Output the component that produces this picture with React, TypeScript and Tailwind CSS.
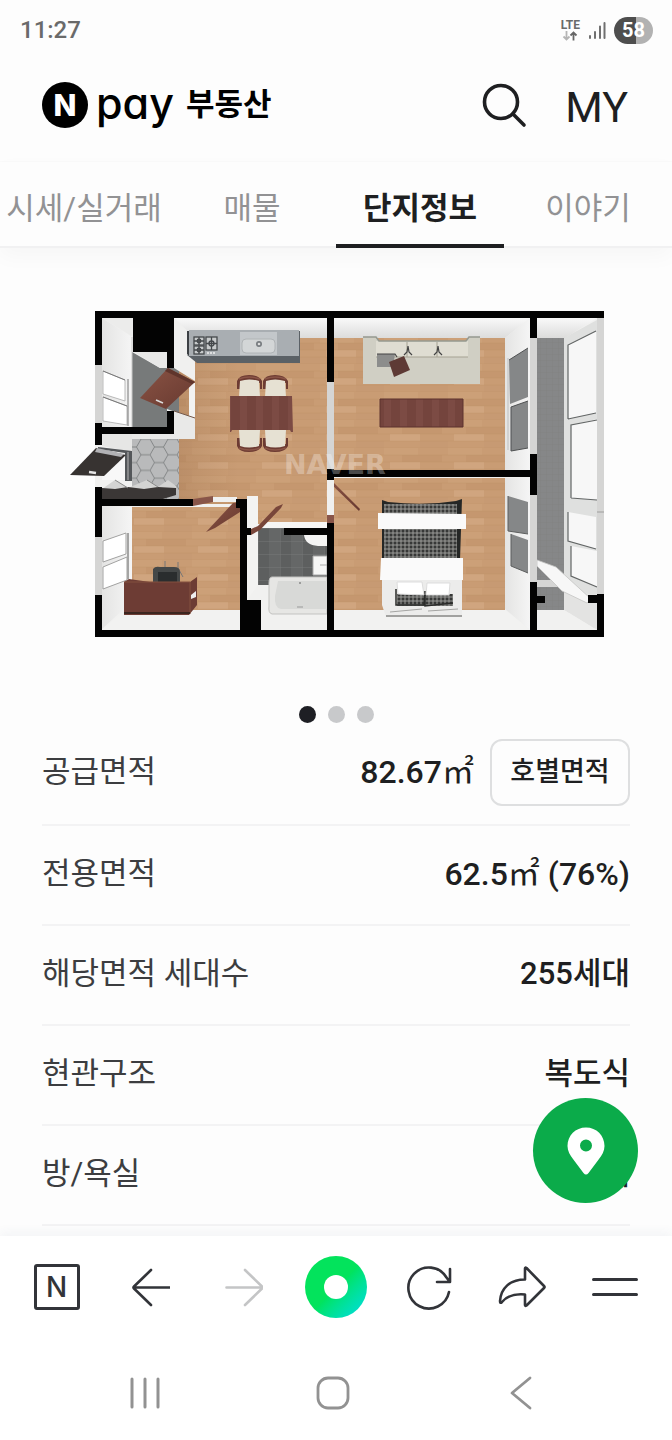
import React from "react";

const tabs = [
  { label: "시세/실거래", active: false },
  { label: "매물", active: false },
  { label: "단지정보", active: true },
  { label: "이야기", active: false },
];

const facts = [
  { label: "공급면적", value: "82.67", unit: "㎡", action: "호별면적" },
  { label: "전용면적", value: "62.5", unit: "㎡", note: " (76%)" },
  { label: "해당면적 세대수", value: "255세대" },
  { label: "현관구조", value: "복도식" },
  { label: "방/욕실", value: "3/1개" },
];

function StatusBar() {
  return (
    <div className="flex h-15 items-center justify-between pr-[19px] pl-5 text-[#6a6a6a]">
      <span className="text-[24px] leading-none font-medium">11:27</span>
      <div className="flex items-center gap-2">
        <div className="flex flex-col items-center">
          <span className="text-[12px] leading-3 font-bold">LTE</span>
          <svg width="16" height="10" viewBox="0 0 16 10" fill="none" strokeWidth="1.800" aria-hidden="true">
            <path d="M4.500 0v8M1.500 5.500l3 3 3-3" stroke="#b5b5b5" />
            <path d="M11.500 9.500V1.500M8.500 4.500l3-3 3 3" stroke="#666" />
          </svg>
        </div>
        <svg width="18" height="20" viewBox="0 0 18 20" stroke="#707070" strokeWidth="2" strokeLinecap="round" aria-hidden="true">
          <path d="M2 16v2M7 12v6M12 6.500V18M16.500 3V18" />
        </svg>
        <div className="flex h-[27px] w-[39px] items-center justify-center rounded-full bg-linear-to-r from-[#4e4e4e] from-57% to-[#b2b2b2] to-57% text-[20px] leading-none font-bold text-white">
          58
        </div>
      </div>
    </div>
  );
}

function Header() {
  return (
    <header className="mx-auto flex h-[102px] w-full items-center justify-between border-b border-[#fafafa] pr-[44px] pb-3 pl-[42px]">
      <a href="#home" className="flex items-center text-black">
        <span className="flex size-[46px] items-center justify-center rounded-full bg-black font-['Inter',sans-serif] text-[30px] leading-none font-extrabold text-white">
          N
        </span>
        <span className="ml-2 pb-1 font-['Inter',sans-serif] text-[43px] leading-[46px] font-medium [font-feature-settings:'cv11']">
          pay
        </span>
        <span className="ml-3 text-[31px] leading-[46px] font-bold">부동산</span>
      </a>
      <div className="flex items-center gap-[38px] text-[#1e1f21]">
        <button type="button" aria-label="검색">
          <svg width="46" height="46" viewBox="0 0 46 46" fill="none" stroke="currentColor" strokeWidth="3.600" strokeLinecap="round">
            <circle cx="20" cy="20" r="16.500" />
            <path d="M32 32l11 11" />
          </svg>
        </button>
        <a href="#my" className="pt-1 text-[43px] leading-[50px]">
          MY
        </a>
      </div>
    </header>
  );
}

function Tabs() {
  return (
    <nav className="grid h-[86px] grid-cols-4 border-b-2 border-[#f1f1f2] text-[31px] shadow-[0_8px_20px_rgba(0,0,0,0.03)]">
      {tabs.map((tab) => (
        <a
          key={tab.label}
          href="#tab"
          aria-current={tab.active ? "page" : undefined}
          className={
            tab.active
              ? "-mb-0.5 flex items-center justify-center border-b-4 border-[#1e1f21] pt-3 font-bold whitespace-nowrap text-[#1e1f21]"
              : "flex items-center justify-center pt-2.5 whitespace-nowrap text-[#929294]"
          }
        >
          {tab.label}
        </a>
      ))}
    </nav>
  );
}

function Chair({ x, y, flip }: { x: number; y: number; flip?: boolean }) {
  return (
    <g transform={flip ? `translate(${x} ${y}) scale(1 -1)` : `translate(${x} ${y})`}>
      <path d="M-3 9V1Q-1-5 9-5T22 1V9h-2V3H0v6z" fill="#6d3b32" />
      <path d="M0 1Q9-2 19 1L20 17H-1z" fill="#e6e1d3" />
      <path d="M-1-1Q9-5 20-1" stroke="#8b5547" strokeWidth="1.500" fill="none" />
    </g>
  );
}

function FloorPlan() {
  return (
    <svg
      viewBox="56 300 560 350"
      className="mx-auto block w-full max-w-[560px]"
      role="img"
      aria-label="평면도"
    >
      <defs>
        <pattern id="wood" width="64" height="28" patternUnits="userSpaceOnUse">
          <rect width="64" height="28" fill="#c99c74" />
          <rect width="34" height="7" fill="#cca078" />
          <rect x="18" y="7" width="40" height="7" fill="#c5976f" />
          <rect x="6" y="14" width="30" height="7" fill="#d0a57f" />
          <rect x="36" y="21" width="28" height="7" fill="#c79a73" />
          <path d="M0 7h64M0 14h64M0 21h64M0 28h64" stroke="#b58459" strokeWidth=".5" opacity=".4" />
        </pattern>
        <pattern id="hex" x="150" y="447" width="27" height="15.600" patternUnits="userSpaceOnUse">
          <rect width="27" height="15.600" fill="#b9babb" />
          <path d="M0 7.800L4.500 0H13.500L18 7.800L13.500 15.600H4.500ZM18 7.800H27" fill="none" stroke="#77797a" strokeWidth=".8" />
        </pattern>
        <pattern id="tile" width="6" height="6" patternUnits="userSpaceOnUse">
          <rect width="6" height="6" fill="#868788" />
          <path d="M0 0H6M0 0V6" stroke="#7e7f80" strokeWidth=".6" />
        </pattern>
        <pattern id="bathTile" x="258" y="528" width="22" height="13" patternUnits="userSpaceOnUse">
          <rect width="22" height="13" fill="#656767" />
          <rect width="11" height="13" fill="#5d5f5f" />
          <path d="M0 0H22M0 0V13" stroke="#7b7d7d" strokeWidth=".8" />
        </pattern>
        <pattern id="plaid" width="4" height="4" patternUnits="userSpaceOnUse">
          <rect width="4" height="4" fill="#373837" />
          <path d="M0 1H4M1 0V4" stroke="#a3a3a0" strokeWidth=".9" />
        </pattern>
        <pattern id="mahogany" width="16" height="20" patternUnits="userSpaceOnUse">
          <rect width="16" height="20" fill="#74443d" />
          <rect width="7" height="20" fill="#7c4b44" />
        </pattern>
        <linearGradient id="wallDown" x1="0" y1="0" x2="0" y2="1">
          <stop offset="0" stopColor="#f9f9f9" />
          <stop offset="1" stopColor="#dcdcdb" />
        </linearGradient>
        <linearGradient id="wallSide" x1="0" y1="0" x2="1" y2="0">
          <stop offset="0" stopColor="#e4e4e3" />
          <stop offset="1" stopColor="#f5f5f5" />
        </linearGradient>
        <linearGradient id="door" x1="0" y1="0" x2="1" y2="1">
          <stop offset="0" stopColor="#8a5344" />
          <stop offset="1" stopColor="#673930" />
        </linearGradient>
        <linearGradient id="shade" x1="0" y1="0" x2="1" y2="0">
          <stop offset="0" stopColor="#60381c" stopOpacity=".12" />
          <stop offset=".4" stopColor="#60381c" stopOpacity="0" />
        </linearGradient>
      </defs>

      {/* interior base */}
      <path d="M95 311H604V637H95Z" fill="#f1f1f0" />

      {/* utility room */}
      <path d="M102 318L132 337V427H102Z" fill="url(#wallSide)" />
      <path d="M102 318H133V337Z" fill="#ececeb" />
      <path d="M132 352L160 368H189V417L167 409V427H132Z" fill="#777a7a" />
      <path d="M134 352H167V368H160Z" fill="#e8e8e7" />
      <path d="M132 337V427" stroke="#c8c8c7" />
      <path d="M103 371L125 380V401L103 394ZM103 397L127 406V425L103 421Z" fill="#fff" stroke="#aaa" strokeWidth=".8" />
      <path d="M103 371L125 380M103 397L127 406M128 379V426" stroke="#777" fill="none" />

      {/* kitchen and hall */}
      <rect x="179" y="338" width="148" height="166" fill="url(#wood)" />
      <rect x="179" y="338" width="148" height="166" fill="url(#shade)" />
      <path d="M247 496H327V524H247Z" fill="url(#wood)" />
      <path d="M174 318H327V338H174Z" fill="url(#wallDown)" />
      <path d="M174 318L195 338V381L174 368Z" fill="#f0f0ef" />
      <path d="M174 411L195 418V439H132L102 434H174Z" fill="#e9e9e8" />
      <path d="M102 434H132V452L102 446Z" fill="#e6e6e5" />
      <path d="M189 383H195V418L189 416Z" fill="#f2f2f1" />
      <path d="M174 411L195 418" stroke="#755a4c" />
      <rect x="132" y="439" width="47" height="60" fill="url(#hex)" />
      <path d="M168 368L195 382L166 409L140 398Z" fill="url(#door)" />
      <path d="M168 368L195 382L192 384L165 371Z" fill="#5f352c" />
      <path d="M156 400L163 403" stroke="#ddd" strokeWidth="1.500" />

      {/* counter */}
      <path d="M187 331L190 331V357L187 354Z" fill="#3c4044" />
      <path d="M187 355L197 363H300V331H298V355Z" fill="#5b6166" />
      <rect x="189" y="330" width="110" height="26" fill="#a9aeb2" />
      <path d="M240 332H277V355H240Z" fill="#c3c7ca" />
      <rect x="242" y="339" width="33" height="14" rx="4" fill="#d3d6d7" stroke="#b0b4b6" />
      <circle cx="259" cy="344" r="3" fill="#777c80" />
      <circle cx="259" cy="344" r="1.300" fill="#ddd" />
      <g fill="#c7cacb" stroke="#45494c" strokeWidth="1.300">
        <rect x="194" y="337" width="10" height="8" />
        <rect x="194" y="346" width="10" height="8" />
        <rect x="206" y="337" width="11" height="13" />
        <circle cx="199" cy="341" r="1.800" />
        <circle cx="199" cy="350" r="1.800" />
        <circle cx="211.500" cy="343.500" r="2.500" />
        <path d="M194 341h10M199 337v8M194 350h10M199 346v8M206 343.500h11M211.500 337v13" />
      </g>
      <path d="M207 353h9" stroke="#eee" strokeWidth="1.500" strokeDasharray="2 1" />

      {/* dining set */}
      <Chair x={240} y={380} />
      <Chair x={266} y={380} />
      <Chair x={240} y={447} flip />
      <Chair x={266} y={447} flip />
      <path d="M230 396H292L293 432H291L290 430H232L231 432H230Z" fill="url(#mahogany)" />

      {/* entrance */}
      <path d="M98 447L132 451V481H125V453L98 449Z" fill="#54575a" />
      <path d="M104 455L125 456V480H102Z" fill="#f8f8f8" />
      <path d="M128 452V480" stroke="#b8b8b8" />
      <path d="M96 448L126 455L104 476L70 475Z" fill="#373331" />
      <path d="M97 448L124 454L121 457L95 452Z" fill="#b2b2b5" />
      <path d="M89 472L96 473" stroke="#e5e5e5" strokeWidth="2.500" />
      <path d="M102 489L115 480L128 488L147 480L158 487L168 480L176 486V494L163 499H102Z" fill="#d4d4d3" />
      <path d="M102 488L115 489L128 487L144 489L158 487L176 488V495L163 499H102Z" fill="#3b3736" />
      <path d="M115 480L128 488M147 480L158 487" stroke="#8b8b8a" />

      {/* study */}
      <path d="M102 506H132V580L124 609L102 629Z" fill="url(#wallSide)" />
      <rect x="132" y="507" width="108" height="103" fill="url(#wood)" />
      <path d="M124 610H240V630H102Z" fill="#f2f2f1" />
      <path d="M103 541L126 533V554L103 562ZM103 567L127 557V580L103 589Z" fill="#fff" stroke="#a2a2a1" />
      <path d="M128 533V579" stroke="#a5a5a4" strokeWidth="2" />
      <path d="M165 561V567M178 562V568L183 577" stroke="#777" fill="none" />
      <path d="M153 569Q155 566 160 567H174Q180 567 180 572V583H153Z" fill="#454848" />
      <path d="M158 572H177V583H158Z" fill="#2a2d2e" />
      <path d="M124 582L129 579L150 582H190L197 577V605L189 615H124Z" fill="#6d3c34" />
      <path d="M190 582V614M124 582H190" stroke="#84503f" />
      <path d="M124 613H190" stroke="#3c2620" strokeWidth="2" />
      <path d="M191 595L196 591V597L191 599Z" fill="#eee" />
      <path d="M206 532L233 503L240 502V512L215 528Z" fill="url(#door)" />

      {/* bathroom */}
      <path d="M247 496H258V600H247Z" fill="#f3f3f2" />
      <rect x="258" y="526" width="69" height="60" fill="url(#bathTile)" />
      <path d="M264 522H327V528H258Z" fill="#f6f6f5" />
      <path d="M247 600L258 585H327V630H261V600Z" fill="#f1f1f0" />
      <path d="M272 577H327V614H272Q268 613 269 606V583Q269 577 272 577Z" fill="#e6e6e4" stroke="#c3c3c1" />
      <path d="M278 581H327V609H281Q274 608 275 596Z" fill="#d8d9d7" />
      <circle cx="300" cy="583" r="1" fill="#888" />
      <path d="M297 607h6" stroke="#999" />
      <path d="M304 535H327V546H318Q305 545 304 535Z" fill="#f5f5f4" />
      <path d="M313 556H327V575H313Z" fill="#f6f6f5" stroke="#aaa" />
      <path d="M320 565H327" stroke="#aaa" />
      <path d="M283 504L281 508L260 530L251 535V529L258 526L276 507Z" fill="url(#door)" />

      {/* living room */}
      <path d="M334 318H530L505 338H334Z" fill="url(#wallDown)" />
      <rect x="334" y="338" width="171" height="133" fill="url(#wood)" />
      <path d="M530 318L505 338V470H530Z" fill="url(#wallSide)" />
      <path d="M509 360L528 348V397L510 404ZM511 407L528 401V448L511 451Z" fill="#858788" />
      <path d="M509 360L528 348M511 407L528 401M511 407V451L528 448" fill="none" stroke="#4f5152" />
      <path d="M508 358V450" stroke="#bdbebe" />
      <path d="M363 337H376L379 341H466L469 337H480V384H363Z" fill="#d0cfc4" />
      <path d="M376 341H468V357H376Z" fill="#dfddd2" />
      <path d="M376 357H468M407 342V357M437 342V357" stroke="#a5a293" />
      <path d="M363 337H376L379 341H466L469 337H480" stroke="#959990" strokeWidth="1.500" fill="none" />
      <path d="M377 354H395L393 367H377Z" fill="#8c8d8c" />
      <path d="M377 354H395L397 357M404 355l3-3 1-6 1 6 3 3M434 355l3-3 1-6 1 6 3 3" stroke="#444" strokeWidth="1.200" fill="none" />
      <path d="M389 362L404 356L410 370L394 377Z" fill="#5e3a35" />
      <path d="M380 399H463V427H380Z" fill="url(#mahogany)" />
      <path d="M380 399H463V427H380Z" fill="none" stroke="#5c332e" />

      {/* bedroom */}
      <rect x="334" y="478" width="171" height="132" fill="url(#wood)" />
      <path d="M505 478H530V630L505 609Z" fill="url(#wallSide)" />
      <path d="M334 610H505L530 630H334Z" fill="#f2f2f1" />
      <path d="M508 496L528 502V534L508 531ZM511 534L528 540V573L511 566Z" fill="#858788" />
      <path d="M511 534V566L528 573M508 496V531L528 534" fill="none" stroke="#5d5f5f" />
      <path d="M331 480L360 509L359 511L331 484Z" fill="url(#door)" />
      <path d="M382 575H462V617H386L382 605Z" fill="#ececeb" />
      <path d="M386 616H462" stroke="#a1a19f" strokeWidth="2" />
      <path d="M382 500L388 502Q425 506 456 501L462 499L460 560H382Z" fill="#252726" />
      <path d="M384 504H457V562H384Z" fill="url(#plaid)" />
      <path d="M378 513L466 514V529H378Z" fill="#fafafa" />
      <path d="M381 558L463 558V580L380 580Z" fill="#fafafa" />
      <path d="M397 594H453V606H397Z" fill="url(#plaid)" />
      <path d="M396 589V605H424L425 591V606L453 603" stroke="#292a29" strokeWidth="1.500" fill="none" />
      <path d="M397 582H422L424 595L398 594ZM427 583H450L449 595L426 595Z" fill="#fff" stroke="#ddd" />
      <path d="M390 612L422 609M428 611L458 609" stroke="#a5a5a3" />

      {/* balcony */}
      <path d="M537 318H597L565 338H537Z" fill="url(#wallDown)" />
      <rect x="537" y="338" width="27" height="272" fill="url(#tile)" />
      <path d="M564 338L597 320V595L588 602L564 590Z" fill="#dfe0df" />
      <path d="M568 345L596 331V413L568 419ZM571 425L597 419V500L571 498ZM568 512L596 517V549L568 541ZM571 546L597 551V587L571 576Z" fill="#f7f7f7" />
      <path d="M568 419V345L596 331M568 419L596 413M571 498V425L597 420M571 498L597 500M568 512V541L596 549M571 546V576L597 587" stroke="#626565" strokeWidth="1.200" fill="none" />
      <path d="M564 590L597 595V630L564 610Z" fill="#e3e3e2" />
      <path d="M537 610H564L597 630H537Z" fill="#f1f1f0" />
      <path d="M537 580H560L565 587H537Z" fill="#d5d5d4" />
      <path d="M537 560L556 567L591 599L587 603L562 591L537 566Z" fill="#f7f7f7" stroke="#c4c4c3" strokeWidth=".8" />

      {/* openings */}
      <path d="M95 365H102V423H95ZM95 537H102V595H95ZM327 382H334V469H327ZM530 338H537V454H530ZM530 495H537V582H530ZM597 318H604V594H597Z" fill="#d5d5d4" />
      <path d="M597 512H604" stroke="#9e9e9d" />
      <path d="M327 480H334V515H327ZM213 497H237V502H213Z" fill="#f0f0ef" />
      <path d="M327 515H334V523H327ZM193 499L213 496V502L193 506Z" fill="#885549" />

      {/* structural walls */}
      <path
        fill="#030303"
        d="M95 311H604V318H95ZM95 630H604V637H95ZM95 311H102V365H95ZM95 423H102V445H95ZM95 487H102V537H95ZM95 595H102V637H95ZM133 318H174V352H133ZM167 350H174V368H167ZM167 411H174V434H167ZM102 427H174V434H102ZM102 499H193V506H102ZM236 499H247V508H236ZM240 499H247V637H240ZM240 600H261V637H240ZM247 528H251V535H247ZM284 528H334V535H284ZM327 311H334V382H327ZM327 469H334V480H327ZM327 523H334V637H327ZM327 470H537V477H327ZM530 311H537V338H530ZM530 454H537V495H530ZM530 582H537V637H530ZM537 596H545V603H537ZM588 595H604V603H588ZM597 594H604V637H597Z"
      />

      <text
        x="284"
        y="474"
        fill="#fff"
        fillOpacity=".3"
        className="font-['DejaVu_Sans',sans-serif] text-[27px] font-bold"
      >
        NAVER
      </text>
    </svg>
  );
}

function Facts() {
  return (
    <dl className="px-[42px]">
      {facts.map((fact) => (
        <div
          key={fact.label}
          className="flex h-[100px] items-center justify-between border-b-2 border-[#f3f3f4] pb-0.5 text-[31px] leading-10 first:pb-1.5"
        >
          <dt className="text-[#3c3d40]">{fact.label}</dt>
          <dd className="flex items-center gap-4 font-medium text-[#1e1f21]">
            <span className={fact.unit ? "text-[32px] whitespace-pre" : ""}>
              {fact.value}
              <span className="font-normal">{fact.unit}</span>
              {fact.note}
            </span>
            {fact.action && (
              <button
                type="button"
                className="h-[67px] w-[140px] rounded-xl border-2 border-[#dedfe0] text-[27px] font-medium"
              >
                {fact.action}
              </button>
            )}
          </dd>
        </div>
      ))}
    </dl>
  );
}

function BrowserBar() {
  const line = {
    fill: "none",
    stroke: "currentColor",
    strokeWidth: 2.6,
    strokeLinecap: "round" as const,
    strokeLinejoin: "round" as const,
  };
  const cell = "flex items-center justify-center";
  return (
    <div className="grid h-[102px] grid-cols-7 px-2.5 text-[#323439]">
      <button type="button" aria-label="네이버 홈" className={cell}>
        <span className="flex size-[46px] items-center justify-center rounded-[3px] border-[3px] border-[#323439] font-['Inter',sans-serif] text-[28px] leading-none font-medium">
          N
        </span>
      </button>
      <button type="button" aria-label="뒤로" className={cell}>
        <svg width="40" height="40" viewBox="0 0 40 40" {...line}>
          <path d="M39.500 20.500H4M21 3L4 19.500Q3 20.500 4 21.500L21 38" />
        </svg>
      </button>
      <button type="button" aria-label="앞으로" className="flex items-center justify-center text-[#c4c5c6]">
        <svg width="40" height="40" viewBox="0 0 40 40" {...line}>
          <path d="M3.500 20.500H39M22 3L39 19.500Q40 20.500 39 21.500L22 38" />
        </svg>
      </button>
      <button type="button" aria-label="그린닷" className={cell}>
        <span className="flex size-[62px] items-center justify-center rounded-full bg-linear-to-br from-[#03e35c] from-50% to-[#02dbe5]">
          <span className="size-6 rounded-full bg-white" />
        </span>
      </button>
      <button type="button" aria-label="새로고침" className={cell}>
        <svg width="46" height="46" viewBox="0 0 46 46" {...line}>
          <path d="M43 28A20.500 20.500 0 1 1 40.500 13.500L43.500 17.500M44 5V18H31" />
        </svg>
      </button>
      <button type="button" aria-label="공유" className={cell}>
        <svg width="48" height="42" viewBox="0 0 48 42" {...line}>
          <path d="M27 2.500Q27 1 28.500 2L46 20Q47 21 46 22L28.500 39.500Q27 40.500 27 39V28.500C16 27.500 9 30 4 36Q2 38 2 35C3 22 12 13.500 27 13.500Z" />
        </svg>
      </button>
      <button type="button" aria-label="메뉴" className={cell}>
        <svg width="48" height="24" viewBox="0 0 48 24" {...line} strokeWidth={3}>
          <path d="M2.500 4.500H45.500M2.500 19.500H45.500" />
        </svg>
      </button>
    </div>
  );
}

function SystemNav() {
  return (
    <div className="grid h-[102px] grid-cols-3 pr-[57px] pl-[51px] text-[#929292]">
      <button type="button" aria-label="최근 앱" className="flex items-center justify-center pt-2">
        <svg width="32" height="34" viewBox="0 0 32 34" stroke="currentColor" strokeWidth="3" strokeLinecap="round">
          <path d="M3 3V31M16 3V31M29 3V31" />
        </svg>
      </button>
      <button type="button" aria-label="홈" className="flex items-center justify-center pt-2">
        <svg width="34" height="34" viewBox="0 0 34 34" fill="none" stroke="currentColor" strokeWidth="2.800">
          <rect x="2" y="2" width="30" height="30" rx="10" />
        </svg>
      </button>
      <button type="button" aria-label="이전" className="flex items-center justify-center pt-2">
        <svg width="22" height="34" viewBox="0 0 22 34" fill="none" stroke="currentColor" strokeWidth="2.800" strokeLinecap="round" strokeLinejoin="round">
          <path d="M20 2L2 17L20 32" />
        </svg>
      </button>
    </div>
  );
}

export default function App() {
  return (
    <div className="flex min-h-screen flex-col bg-[#fdfdfd] font-['Roboto','Noto_Sans_CJK_KR',sans-serif]">
      <StatusBar />
      <Header />
      <Tabs />
      <main className="flex-1">
        <section className="pt-[52px]">
          <FloorPlan />
          <div className="mt-14 mb-[3px] flex justify-center gap-3">
            <span className="size-[17px] rounded-full bg-[#1e1f24]" />
            <span className="size-[17px] rounded-full bg-[#c8c9cb]" />
            <span className="size-[17px] rounded-full bg-[#c8c9cb]" />
          </div>
        </section>
        <Facts />
      </main>
      <footer className="sticky bottom-0 bg-white shadow-[0_-4px_10px_rgba(60,80,110,0.05)]">
        <button
          type="button"
          aria-label="지도에서 보기"
          className="absolute -top-[138px] right-[34px] flex size-[105px] items-center justify-center rounded-full bg-[#0bab4a] text-white"
        >
          <svg width="38" height="48" viewBox="0 0 38 48" fill="currentColor" fillRule="evenodd">
            <path d="M19 0.500C8.500 0.500 0.500 8.500 0.500 19C0.500 24 3 28 6 32L16.500 46Q19 49 21.500 46L32 32C35 28 37.500 24 37.500 19C37.500 8.500 29.500 0.500 19 0.500ZM19 12.500A6 6 0 1 1 19 24.500A6 6 0 0 1 19 12.500Z" />
          </svg>
        </button>
        <BrowserBar />
        <SystemNav />
      </footer>
    </div>
  );
}
